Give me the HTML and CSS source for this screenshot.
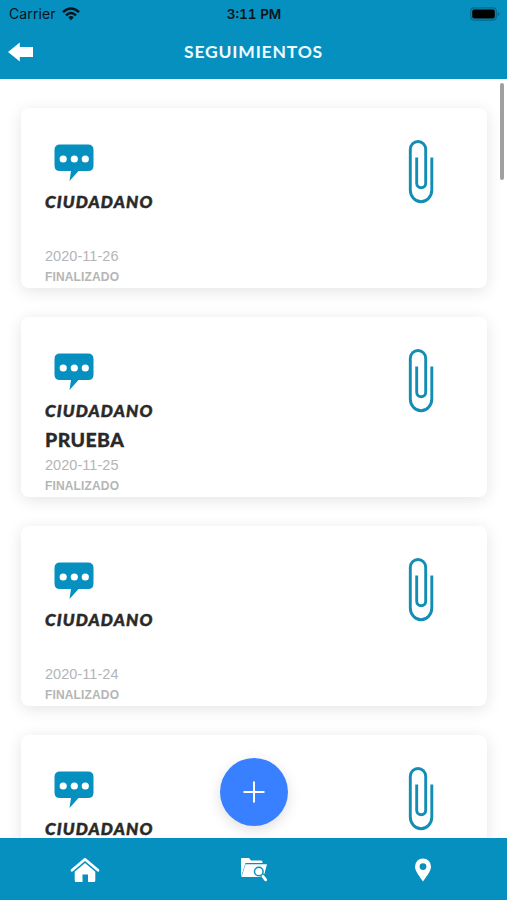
FILE: index.html
```html
<!DOCTYPE html>
<html lang="es">
<head>
    <meta charset="UTF-8">
    <meta name="viewport" content="width=device-width, initial-scale=1.0">
    <title>Seguimientos</title>
    <link rel="stylesheet" href="styles.css">
</head>
<body>
    <svg class="symbols" width="0" height="0">
        <symbol id="icon-chat" viewBox="0 0 40 38">
            <path fill="#0590c0" d="M6 0.5H34Q39.5 0.5 39.5 6V21.500Q39.500 27 34 27H24.500L15.500 37L17 27H6Q0.500 27 0.500 21.500V6Q0.500 0.500 6 0.500Z"/>
            <circle cx="9.200" cy="15" r="3.600" fill="#fff"/>
            <circle cx="20.300" cy="15" r="3.600" fill="#fff"/>
            <circle cx="31.300" cy="15" r="3.600" fill="#fff"/>
        </symbol>
        <symbol id="icon-clip" viewBox="0 0 26 64">
            <path fill="none" stroke="#148db6" stroke-width="2.900" d="M23.800 17.500V50A10.750 11.700 0 0 1 2.300 50V9.500A7.700 8 0 0 1 17.700 9.500V43.200A4.500 4.500 0 0 1 8.700 43.200V17.500"/>
        </symbol>
    </svg>

    <header class="header">
        <div class="status-bar">
            <div class="carrier">
                <span>Carrier</span>
                <svg width="18" height="14" viewBox="0 0 18 14">
                    <g fill="none" stroke="#07131a" stroke-width="2.500">
                        <path d="M1 5.200Q9 -2.200 17 5.200"/>
                        <path d="M4 8.300Q9 3.600 14 8.300"/>
                    </g>
                    <path fill="#07131a" d="M6.200 10.300Q9 7.900 11.800 10.300L9 13.200Z"/>
                </svg>
            </div>
            <div class="time">3:11 PM</div>
            <svg class="battery" width="30" height="14" viewBox="0 0 30 14">
                <rect x="0.700" y="0.900" width="25.600" height="12.200" rx="3.500" fill="none" stroke="#06698b" stroke-width="1.200"/>
                <rect x="2.200" y="2.500" width="22.600" height="9" rx="2" fill="#000"/>
                <path d="M27.700 5V9.200Q29.500 8.500 29.500 7Q29.500 5.600 27.700 5Z" fill="#06698b"/>
            </svg>
        </div>
        <div class="title-bar">
            <svg class="back" width="26" height="20" viewBox="0 0 26 20">
                <path fill="#fff" d="M0 10L11.800 0.500V5H25V15H11.800V19.500Z"/>
            </svg>
            <h1>SEGUIMIENTOS</h1>
        </div>
    </header>

    <main class="list">
        <article class="card">
            <div class="info">
                <svg class="chat" width="40" height="38"><use href="#icon-chat"/></svg>
                <div class="author">CIUDADANO</div>
                <div class="message"></div>
                <div class="date">2020-11-26</div>
                <div class="state">FINALIZADO</div>
            </div>
            <svg class="clip" width="26" height="64"><use href="#icon-clip"/></svg>
        </article>
        <article class="card">
            <div class="info">
                <svg class="chat" width="40" height="38"><use href="#icon-chat"/></svg>
                <div class="author">CIUDADANO</div>
                <div class="message">PRUEBA</div>
                <div class="date">2020-11-25</div>
                <div class="state">FINALIZADO</div>
            </div>
            <svg class="clip" width="26" height="64"><use href="#icon-clip"/></svg>
        </article>
        <article class="card">
            <div class="info">
                <svg class="chat" width="40" height="38"><use href="#icon-chat"/></svg>
                <div class="author">CIUDADANO</div>
                <div class="message"></div>
                <div class="date">2020-11-24</div>
                <div class="state">FINALIZADO</div>
            </div>
            <svg class="clip" width="26" height="64"><use href="#icon-clip"/></svg>
        </article>
        <article class="card">
            <div class="info">
                <svg class="chat" width="40" height="38"><use href="#icon-chat"/></svg>
                <div class="author">CIUDADANO</div>
            </div>
            <svg class="clip" width="26" height="64"><use href="#icon-clip"/></svg>
        </article>
        <div class="scroll-thumb"></div>
        <button class="add-button" aria-label="Agregar">
            <svg width="22" height="22" viewBox="0 0 22 22">
                <path stroke="#fff" stroke-width="2" d="M11 0.500V21.500M0.500 11H21.500"/>
            </svg>
        </button>
    </main>

    <nav class="tabs">
        <a class="tab">
            <svg width="30" height="26" viewBox="0 0 30 26">
                <path fill="none" stroke="#fff" stroke-width="2.700" stroke-linecap="round" stroke-linejoin="round" d="M2 13.300L15 2.300L28 13.300"/>
                <path fill="#fff" d="M15 6L25.300 14.700V23.500Q25.300 25 23.800 25H18V17.500H12.500V25H6.200Q4.700 25 4.700 23.500V14.700Z"/>
            </svg>
        </a>
        <a class="tab">
            <svg width="28" height="26" viewBox="0 0 28 26">
                <path fill="#fff" d="M1 20V2Q1 1 2 1H9L11 3.500H21Q22.500 3.500 22.500 5V6H5.500Z"/>
                <path fill="#fff" d="M5.500 7.300H27L23.500 20H1.500Z"/>
                <path stroke="#0590c0" stroke-width="4.600" d="M22 18L26 22.500"/>
                <circle cx="18.800" cy="14.500" r="4.300" fill="#fff" stroke="#0590c0" stroke-width="1.500"/>
                <path stroke="#fff" stroke-width="2.800" stroke-linecap="round" d="M23 19.300L25.700 22.800"/>
            </svg>
        </a>
        <a class="tab">
            <svg width="18" height="24" viewBox="0 0 18 24">
                <path fill="#fff" fill-rule="evenodd" d="M9 0.500A8 8 0 0 1 17 8.500C17 13.500 11.500 19.500 9 23.500C6.500 19.500 1 13.500 1 8.500A8 8 0 0 1 9 0.500ZM9 5.200A3.400 3.400 0 1 0 9 12A3.400 3.400 0 1 0 9 5.200Z"/>
            </svg>
        </a>
    </nav>
</body>
</html>
```
FILE: styles.css
```css
body {
    display: flex;
    flex-direction: column;
    height: 900px;
    margin: 0;
    overflow: hidden;
    font-family: "Liberation Sans", Arial, sans-serif;
    background-color: #fff;
}

.symbols {
    position: absolute;
}

/* Cabecera */
.header {
    flex: none;
    height: 79px;
    background-color: #0590c0;
}

.status-bar {
    display: grid;
    grid-template-columns: 1fr auto 1fr;
    align-items: center;
    height: 27px;
    padding: 0 7px 0 8px;
    font-family: Inter, sans-serif;
    font-size: 14px;
    color: #07131a;
}

.carrier {
    display: flex;
    align-items: center;
    gap: 6px;
    padding-left: 1px;
    letter-spacing: 0.1px;
}

.time {
    font-size: 13.5px;
    font-weight: 600;
    font-variant-numeric: tabular-nums;
}

.battery {
    justify-self: end;
}

.title-bar {
    display: grid;
    grid-template-columns: 26px 1fr 26px;
    align-items: center;
    height: 50px;
    padding: 0 8px;
}

.title-bar h1 {
    margin: 0 0 2px;
    font-family: Lato, sans-serif;
    font-size: 17.5px;
    font-weight: 700;
    letter-spacing: 0.8px;
    text-align: center;
    color: #f0fbff;
}

/* Lista de seguimientos */
.list {
    position: relative;
    flex: 1;
    min-height: 0;
    padding: 29px 20px 0 21px;
    overflow: hidden;
}

.card {
    display: flex;
    justify-content: space-between;
    box-sizing: border-box;
    height: 180px;
    margin-bottom: 29px;
    padding: 32px 53px 0 24px;
    border-radius: 8px;
    background-color: #fff;
    box-shadow: 0 3px 16px rgba(0, 0, 0, 0.11);
}

.info {
    display: flex;
    flex-direction: column;
}

.chat {
    margin: 4px 0 0 9px;
}

.author {
    height: 28px;
    margin-top: 6px;
    font-family: Lato, sans-serif;
    font-size: 17px;
    font-style: italic;
    font-weight: 900;
    line-height: 27px;
    letter-spacing: 1.15px;
    -webkit-text-stroke: 0.5px #292929;
    color: #292929;
}

.message {
    height: 29px;
    font-family: Lato, sans-serif;
    font-size: 19.5px;
    font-weight: 900;
    line-height: 29px;
    letter-spacing: 0.4px;
    -webkit-text-stroke: 0.3px #292929;
    color: #292929;
}

.date {
    height: 21px;
    font-size: 14.5px;
    line-height: 22px;
    letter-spacing: 0.05px;
    color: #b5b5b5;
}

.state {
    height: 20px;
    font-size: 12px;
    font-weight: 700;
    line-height: 22px;
    letter-spacing: 0.15px;
    color: #b5b5b5;
}

.scroll-thumb {
    position: absolute;
    top: 4px;
    right: 3px;
    width: 4px;
    height: 97px;
    border-radius: 2px;
    background-color: #a0a0a0;
}

.add-button {
    position: absolute;
    bottom: 12px;
    left: 50%;
    display: flex;
    align-items: center;
    justify-content: center;
    width: 68px;
    height: 68px;
    padding: 0;
    border: none;
    border-radius: 50%;
    background-color: #3880ff;
    box-shadow: 0 4px 14px rgba(0, 0, 0, 0.13);
    transform: translateX(-50%);
}

/* Barra inferior */
.tabs {
    display: grid;
    grid-template-columns: repeat(3, 1fr);
    flex: none;
    box-sizing: border-box;
    height: 62px;
    padding-top: 1px;
    background-color: #0590c0;
}

.tab {
    display: flex;
    align-items: center;
    justify-content: center;
}
```
